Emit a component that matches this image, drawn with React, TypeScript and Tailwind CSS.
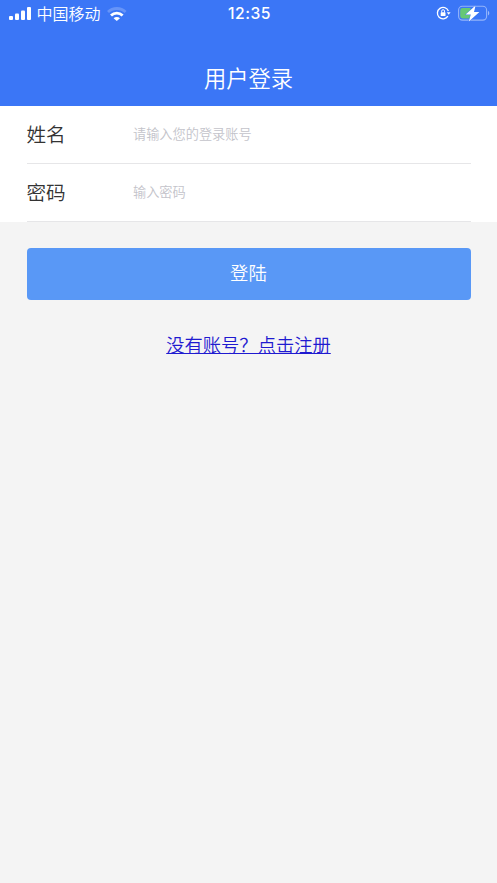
import React, { useState } from 'react';

interface FieldProps {
  label: string;
  placeholder: string;
  type?: string;
  value: string;
  onChange: (value: string) => void;
}

const StatusBar: React.FC = () => (
  <div className="grid h-[27px] grid-cols-[1fr_auto_1fr] items-center pl-[9px] pr-[7px]">
    <div className="flex items-center">
      <svg className="h-[14px] w-[22px]" viewBox="0 0 22 14" fill="currentColor">
        <rect x="0" y="9" width="4" height="4" rx="1" />
        <rect x="6" y="6.5" width="4" height="6.5" rx="1" />
        <rect x="12" y="3.5" width="4" height="9.5" rx="1" />
        <rect x="18" y="0" width="4" height="13" rx="1" />
      </svg>
      <span className="relative -top-px ml-[5.5px] text-[16px] leading-[20px] font-[350]">中国移动</span>
      <svg className="ml-[6.5px] h-[14px] w-[20px]" viewBox="0 0 20 14" fill="none" stroke="currentColor" strokeWidth="2.8">
        <path d="M1 5.1a12.6 12.6 0 0 1 17.6 0" opacity="0.22" />
        <path d="M4 8.4a8.3 8.3 0 0 1 11.6 0" />
        <path d="M9.8 14l-3.2-2.8a4.6 4.6 0 0 1 6.4 0z" fill="currentColor" stroke="none" />
      </svg>
    </div>
    <span className="font-[Inter] text-[15.7px] leading-[20px] font-medium tracking-[0.5px]">12:35</span>
    <div className="flex items-center justify-end">
      <svg className="relative -top-[0.5px] mr-[7px] h-[14px] w-[15px]" viewBox="0 0 15 14" fill="none" stroke="currentColor" strokeWidth="1.3">
        <path d="M11.9 10.2A5.7 5.7 0 1 1 12.4 5" />
        <path d="M10.8 6.2h3.8l-1.9 2.5z" fill="currentColor" stroke="none" />
        <rect x="4.7" y="6.3" width="4.8" height="3.7" rx="0.6" fill="currentColor" stroke="none" />
        <path d="M5.7 6.5V5.1a1.4 1.4 0 0 1 2.8 0v1.4" strokeWidth="1" />
      </svg>
      <svg className="h-[17px] w-[32px]" viewBox="0 0 32 17" fill="none">
        <rect x="0.6" y="1.3" width="28" height="13.8" rx="3.8" stroke="#fff" strokeOpacity="0.45" strokeWidth="1.1" />
        <path d="M30 6.1c1.7.6 1.7 3.8 0 4.4z" fill="#fff" fillOpacity="0.5" />
        <path d="M4.6 3h8v10.4h-8a2.4 2.4 0 0 1-2.4-2.4V5.4A2.4 2.4 0 0 1 4.6 3z" fill="#65c875" />
        <path d="M17.6 0.6L7.6 9.5h5.2l-2 6.9 10.6-9.3h-5.4z" fill="#fff" stroke="#3b76f6" strokeWidth="0.8" paintOrder="stroke" />
      </svg>
    </div>
  </div>
);

const Field: React.FC<FieldProps> = ({ label, placeholder, type = 'text', value, onChange }) => (
  <label className="mx-[26.5px] flex h-[58px] items-center border-b border-[#e6e6e8] pb-px">
    <span className="w-[106.5px] text-[19.6px] font-[350] text-[#333]">{label}</span>
    <input
      type={type}
      placeholder={placeholder}
      className="min-w-0 flex-1 bg-transparent text-[13.2px] font-[350] text-[#333] outline-none placeholder:text-[#c3c3ca]"
      value={value}
      onChange={e => onChange(e.target.value)}
    />
  </label>
);

const App: React.FC = () => {
  const [name, setName] = useState('');
  const [password, setPassword] = useState('');

  return (
    <div className="min-h-screen bg-[#f4f4f4] font-['Noto_Sans_CJK_SC',sans-serif]">
      <header className="h-[106px] bg-[#3b76f6] text-white">
        <StatusBar />
        <h1 className="mt-[33px] text-center text-[22.3px] leading-[34px] font-[350]">用户登录</h1>
      </header>

      <form onSubmit={e => e.preventDefault()}>
        <div className="bg-white">
          <Field label="姓名" placeholder="请输入您的登录账号" value={name} onChange={setName} />
          <Field label="密码" placeholder="输入密码" type="password" value={password} onChange={setPassword} />
        </div>
        <div className="px-[26.5px] pt-[26px]">
          <button type="submit" className="h-[51.5px] w-full rounded-[4px] bg-[#5998f6] pb-[2px] text-[18.4px] font-[350] text-white">
            登陆
          </button>
        </div>
      </form>

      <div className="mt-[30.5px] text-center text-[18.3px] leading-[28px] font-[350]">
        <a href="#" className="text-[#1f1ad0] underline">没有账号？点击注册</a>
      </div>
    </div>
  );
};

export default App;
